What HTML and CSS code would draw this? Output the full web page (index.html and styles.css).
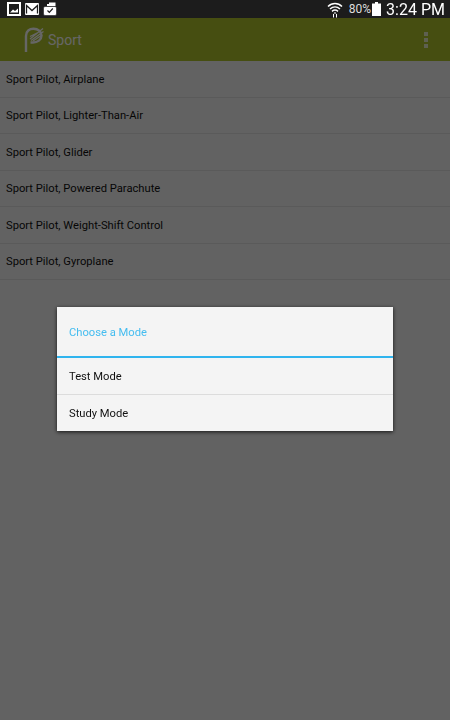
FILE: index.html
```html
<!DOCTYPE html>
<html lang="en">
<head>
  <meta charset="UTF-8">
  <meta name="viewport" content="width=device-width, initial-scale=1.0">
  <title>Sport</title>
  <link rel="stylesheet" href="styles.css">
</head>
<body>
  <div class="status-bar">
    <div class="status-icons">
      <svg width="14" height="14" viewBox="0 0 14 14"><rect x="1" y="1" width="12" height="12" fill="#1c1c1c" stroke="#fff" stroke-width="2"/><path d="M3 10.500 6 7.500 8 9 11 6.500V10.500Z" fill="#fff"/></svg>
      <svg width="14" height="12" viewBox="0 0 14 12"><rect width="14" height="12" rx="1" fill="#fff"/><path d="M1.500 10.500V2.500L7 7.500 12.500 2.500V10.500" fill="none" stroke="#1c1c1c" stroke-width="1.300"/></svg>
      <svg width="14" height="14" viewBox="0 0 14 14"><path d="M4 4V2L6 2V.5H12.500V4Z" fill="#fff"/><rect x=".5" y="4.500" width="13" height="9" rx="1.500" fill="#fff" stroke="#1c1c1c" stroke-width=".6"/><path d="M4.500 8.500 6.300 10.300 9.800 6.500" fill="none" stroke="#1c1c1c" stroke-width="1.200"/></svg>
    </div>
    <div class="status-right">
      <svg class="wifi" width="16" height="17" viewBox="0 0 16 17"><path d="M1 5.500C5 1.500 11 1.500 15 5.500M3 8C6 5.200 10 5.200 13 8M5 10.300C6.800 8.800 9.200 8.800 11 10.300" fill="none" stroke="#fff" stroke-width="1.500"/><path d="M8 11 6.500 12.500H9.500ZM6 13V16.500H7V13ZM9 13V16.500H10V13Z" fill="#fff"/></svg>
      <span class="battery-pct">80%</span>
      <svg width="9" height="14" viewBox="0 0 9 14"><path d="M3 0H6V1.500H9V14H0V1.500H3Z" fill="#fff"/></svg>
      <span class="clock">3:24 PM</span>
    </div>
  </div>

  <div class="action-bar">
    <svg class="logo" width="20" height="26" viewBox="0 0 20 26"><path d="M2 25V9C2 4 5.500 1.800 9.500 1.800 14 1.800 17.500 4.500 17.500 8.500 17.500 12.800 13.500 15.500 9 15.500H6.500" fill="none" stroke="#fff" stroke-width="2.400"/><path d="M6 12 19 1.500M7 13.500 19.500 4.500M6 9.500 15 5M9 14 18 8" fill="none" stroke="#fff" stroke-width="1.300"/></svg>
    <span class="action-title">Sport</span>
    <div class="overflow"><i></i><i></i><i></i></div>
  </div>

  <ul class="license-list">
    <li>Sport Pilot, Airplane</li>
    <li>Sport Pilot, Lighter-Than-Air</li>
    <li>Sport Pilot, Glider</li>
    <li>Sport Pilot, Powered Parachute</li>
    <li>Sport Pilot, Weight-Shift Control</li>
    <li>Sport Pilot, Gyroplane</li>
  </ul>

  <div class="scrim">
    <div class="dialog">
      <div class="dialog-title">Choose a Mode</div>
      <div class="dialog-item">Test Mode</div>
      <div class="dialog-item">Study Mode</div>
    </div>
  </div>
</body>
</html>
```

FILE: styles.css
```css
* {
  box-sizing: border-box;
  margin: 0;
  padding: 0;
}

body {
  height: 720px;
  overflow: hidden;
  background: #f5f5f5;
  color: #111;
  font-family: Roboto, sans-serif;
}

.status-bar {
  position: relative;
  z-index: 20;
  display: flex;
  justify-content: space-between;
  align-items: center;
  height: 18px;
  padding: 0 5px 0 7px;
  background: #1c1c1c;
  color: #fff;
}

.status-icons,
.status-right {
  display: flex;
  align-items: center;
}

.status-icons {
  gap: 4px;
}

.wifi {
  margin-right: 6px;
}

.battery-pct {
  font-size: 12px;
  color: #ddd;
  margin-right: 1px;
}

.clock {
  margin-left: 5px;
  font-size: 16px;
}

.action-bar {
  display: flex;
  align-items: center;
  height: 43px;
  padding: 0 22px 0 24px;
  background: #afc42c;
  color: #fff;
}

.logo {
  margin-right: 4px;
}

.action-title {
  flex: 1;
  font-size: 14px;
}

.overflow {
  display: flex;
  flex-direction: column;
  gap: 2px;
  opacity: 0.75;
}

.overflow i {
  width: 4px;
  height: 4px;
  background: #fff;
}

.license-list {
  list-style: none;
}

.license-list li {
  height: 36.5px;
  padding: 0.5px 6px 0;
  line-height: 36.5px;
  font-size: 11.2px;
  border-bottom: 1px solid #e0e0e0;
}

.scrim {
  position: fixed;
  inset: 0;
  z-index: 10;
  display: flex;
  justify-content: center;
  padding-top: 307px;
  background: rgba(0, 0, 0, 0.6);
}

.dialog {
  width: 336px;
  height: 124px;
  background: #f4f4f4;
  box-shadow: 0 1px 4px rgba(0, 0, 0, 0.8);
}

.dialog-title {
  height: 51px;
  padding-left: 12px;
  line-height: 51px;
  font-size: 11.2px;
  color: #45bdf0;
  border-bottom: 2px solid #2fb4ee;
}

.dialog-item {
  height: 37px;
  padding-left: 12px;
  line-height: 37px;
  font-size: 11.2px;
  border-bottom: 1px solid #dcdcdc;
}

.dialog-item:last-child {
  border-bottom: none;
}
```
